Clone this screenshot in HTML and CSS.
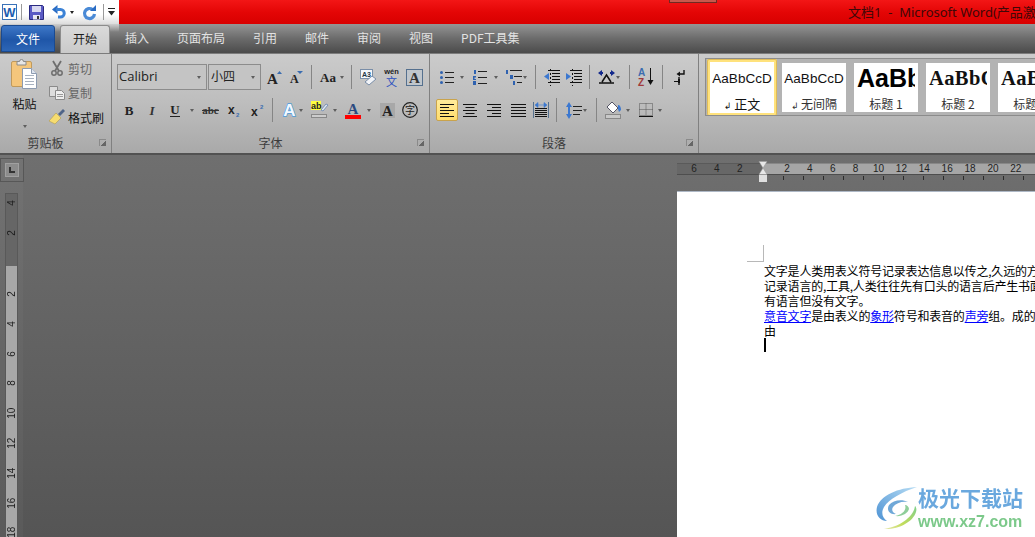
FILE: index.html
```html
<!DOCTYPE html>
<html lang="zh">
<head>
<meta charset="utf-8">
<title>文档1 - Microsoft Word</title>
<link rel="stylesheet" href="styles.css">
</head>
<body>
<div class="window">
  <header class="titlebar">
    <div class="qat">
      <svg class="ml2" width="15" height="16" viewBox="0 0 15 16"><rect x=".5" y=".5" width="14" height="15" fill="#fff" stroke="#3a72b8"/><text x="7.5" y="13" text-anchor="middle" class="svg-sans" font-size="13" font-weight="700" fill="#1c5cb0">W</text></svg>
      <i class="qsep ml4"></i>
      <svg class="ml7" width="15" height="15" viewBox="0 0 15 15"><path d="M.5.5h13l1 1v13H.5z" fill="#5a5ac4" stroke="#2a2a80"/><rect x="3" y="1" width="9" height="6" fill="#d8d8f0"/><rect x="4" y="10" width="7" height="4.500" fill="#e8e8f4"/><rect x="8" y="11" width="2" height="3" fill="#333"/></svg>
      <svg class="ml8" width="13" height="14" viewBox="0 0 13 14"><path d="M0 4.500 5.500 0v9z" fill="#2a6cc4"/><path d="M4 4.500h4.500a3.300 3.300 0 0 1 0 7.500H6" fill="none" stroke="#3b82d6" stroke-width="3"/></svg>
      <i class="drop dark ml5"></i>
      <svg class="ml9" width="13" height="14" viewBox="0 0 13 14"><path d="M9.500 4.500A5 5 0 1 0 11.500 9" fill="none" stroke="#4a8ad6" stroke-width="3.200"/><path d="M7 6h6V0z" fill="#2a6cc4"/></svg>
      <i class="qsep ml7"></i>
      <svg class="ml4" width="7" height="8" viewBox="0 0 7 8"><path d="M0 0h7v1H0z" fill="#222"/><path d="M0 3h7L3.500 7.500z" fill="#222"/></svg>
    </div>
    <div class="title-red">
      <span class="winctl"></span>
      <span class="title-text">文档1&nbsp; - &nbsp;Microsoft Word(产品激活失败)</span>
    </div>
  </header>

  <nav class="tabs">
    <div class="tab-file">文件</div>
    <div class="tab-home">开始</div>
    <div class="tab t1">插入</div>
    <div class="tab t2">页面布局</div>
    <div class="tab t2">引用</div>
    <div class="tab t2">邮件</div>
    <div class="tab t2">审阅</div>
    <div class="tab t2">视图</div>
    <div class="tab t2">PDF工具集</div>
  </nav>

  <section class="ribbon">
    <div class="group g-clip">
      <div class="clip-body">
        <div class="paste">
          <svg width="27" height="31" viewBox="0 0 27 31"><rect x=".5" y="3.500" width="20" height="25" rx="1.500" fill="#f4c67c" stroke="#c09a5c"/><path d="M6 3.500h2.500a2 2 0 0 1 4 0H15v3.500H6z" fill="#e6e6e6" stroke="#8a8a8a"/><path d="M11.500 10.500h9l5 5v15h-14z" fill="#fff" stroke="#8d9bb0"/><path d="M20.500 10.500v5h5" fill="#dfe6f0" stroke="#8d9bb0"/><path d="M14 17.500h9M14 20.500h9M14 23.500h9M14 26.500h9" stroke="#a8b2c0"/></svg>
          <span class="paste-label">粘贴</span>
          <i class="drop"></i>
        </div>
        <div class="clip-list">
          <div class="clip-item off"><svg width="16" height="16" viewBox="0 0 16 16"><path d="M4 1 10 11M12 1 6 11" stroke="#6e6e6e" stroke-width="1.800" fill="none"/><circle cx="5" cy="13" r="2.200" fill="none" stroke="#6e6e6e" stroke-width="1.500"/><circle cx="11" cy="13" r="2.200" fill="none" stroke="#6e6e6e" stroke-width="1.500"/></svg><span>剪切</span></div>
          <div class="clip-item off"><svg width="16" height="16" viewBox="0 0 16 16"><path d="M.5 1.500h8v10h-8z" fill="#ddd" stroke="#8a8a8a"/><path d="M6.500 5.500h6l3 3v6h-9z" fill="#eee" stroke="#8a8a8a"/><path d="M8 9.500h6M8 11.500h6" stroke="#999"/></svg><span>复制</span></div>
          <div class="clip-item"><svg width="16" height="16" viewBox="0 0 16 16"><path d="M0 12 7 4l5 5-6 6z" fill="#f6dc70" stroke="#b09a50" stroke-width=".6"/><path d="M9 5l5-5 2 2-5 5z" fill="#4f6488"/></svg><span>格式刷</span></div>
        </div>
      </div>
      <footer class="group-label">剪贴板<i class="launcher"></i></footer>
    </div>

    <div class="group g-font">
      <div class="row r1">
        <div class="combo c-font ml5"><span>Calibri</span><i class="drop"></i></div>
        <div class="combo c-size ml1"><span>小四</span><i class="drop"></i></div>
        <svg class="ml6" width="15" height="15" viewBox="0 0 15 15"><text x="0" y="14" class="svg-serif" font-size="15" font-weight="700" fill="#222">A</text><path d="M10 4l2.500-3L15 4z" fill="#3a6cb0"/></svg>
        <svg class="ml8" width="13" height="13" viewBox="0 0 13 13"><text x="0" y="12" class="svg-serif" font-size="12" font-weight="700" fill="#222">A</text><path d="M7 0h6l-3 3z" fill="#3a6cb0"/></svg>
        <i class="sep ml8"></i>
        <svg class="ml8" width="17" height="14" viewBox="0 0 17 14"><text x="0" y="12" class="svg-serif" font-size="13" font-weight="700" fill="#222">Aa</text></svg>
        <i class="drop ml3"></i>
        <i class="sep ml7"></i>
        <svg class="ml8" width="17" height="17" viewBox="0 0 17 17"><rect x=".5" y=".5" width="12" height="9" fill="#f4f7fb" stroke="#7a8ea8"/><text x="2" y="8" class="svg-sans" font-size="7" font-weight="700" fill="#234">A3</text><path d="M5 13l7-6 4 3-7 6z" fill="#f2f4f8" stroke="#7a8ea8"/></svg>
        <svg class="ml6" width="17" height="18" viewBox="0 0 17 18"><text x="8.500" y="6" text-anchor="middle" class="svg-sans" font-size="7.500" font-weight="700" fill="#222">wén</text><text x="8.500" y="18" text-anchor="middle" class="svg-cjk" font-size="11" fill="#2a4fc0">文</text></svg>
        <svg class="ml6" width="17" height="17" viewBox="0 0 17 17"><rect x=".5" y=".5" width="16" height="16" fill="#c0c6cc" stroke="#55708e"/><text x="8.500" y="14" text-anchor="middle" class="svg-serif" font-size="15" font-weight="700" fill="#333">A</text></svg>
      </div>
      <div class="row r2">
        <svg class="ml11" width="12" height="14" viewBox="0 0 12 14"><text x="6" y="12" text-anchor="middle" class="svg-serif" font-size="13" font-weight="700" fill="#222">B</text></svg>
        <svg class="ml12" width="10" height="14" viewBox="0 0 10 14"><text x="5" y="12" text-anchor="middle" class="svg-serif" font-size="13" font-weight="700" font-style="italic" fill="#333">I</text></svg>
        <svg class="ml12" width="12" height="15" viewBox="0 0 12 15"><text x="6" y="11" text-anchor="middle" class="svg-serif" font-size="13" font-weight="700" fill="#222">U</text><path d="M1 13.500h10" stroke="#222"/></svg>
        <i class="drop ml9"></i>
        <svg class="ml8" width="17" height="14" viewBox="0 0 17 14"><text x="8.500" y="11" text-anchor="middle" class="svg-serif" font-size="11" font-weight="700" fill="#333">abc</text><path d="M0 7.500h17" stroke="#333"/></svg>
        <svg class="ml9" width="13" height="13" viewBox="0 0 13 13"><text x="0" y="10" class="svg-sans" font-size="12" font-weight="700" fill="#222">x</text><text x="8" y="12.500" class="svg-sans" font-size="6" font-weight="700" fill="#3a6cb0">2</text></svg>
        <svg class="ml10" width="14" height="13" viewBox="0 0 14 13"><text x="0" y="12" class="svg-sans" font-size="12" font-weight="700" fill="#222">x</text><text x="9" y="5" class="svg-sans" font-size="6" font-weight="700" fill="#3a6cb0">2</text></svg>
        <i class="sep ml7"></i>
        <svg class="ml9" width="15" height="16" viewBox="0 0 15 16"><text x="7.500" y="14" text-anchor="middle" class="svg-sans glow" font-size="17" font-weight="700" fill="#f2f8ff">A</text></svg>
        <i class="drop ml2"></i>
        <svg class="ml8" width="17" height="18" viewBox="0 0 17 18"><rect x="0" y="0" width="10" height="9" fill="#ffff40"/><text x="0" y="8" class="svg-sans" font-size="9" font-weight="700" fill="#222">ab</text><path d="M10 9l5-6 2 1-5 6z" fill="#dfe8f4" stroke="#5a7aa8" stroke-width=".7"/><rect x=".5" y="13.500" width="15" height="3" fill="#ccc" stroke="#888"/></svg>
        <i class="drop ml5"></i>
        <svg class="ml8" width="16" height="18" viewBox="0 0 16 18"><text x="8" y="13" text-anchor="middle" class="svg-serif" font-size="15" font-weight="700" fill="#2b4a80">A</text><rect y="14" width="16" height="4" fill="#f00"/></svg>
        <i class="drop ml6"></i>
        <svg class="ml9" width="15" height="15" viewBox="0 0 15 15"><rect width="15" height="15" fill="#a8a8a8"/><text x="7.500" y="13" text-anchor="middle" class="svg-serif" font-size="15" font-weight="700" fill="#222">A</text></svg>
        <svg class="ml7" width="16" height="16" viewBox="0 0 16 16"><circle cx="8" cy="8" r="7.300" fill="none" stroke="#222" stroke-width="1.200"/><text x="8" y="12" text-anchor="middle" class="svg-cjk" font-size="10" fill="#222">字</text></svg>
      </div>
      <footer class="group-label">字体<i class="launcher"></i></footer>
    </div>

    <div class="group g-para">
      <div class="row r1">
        <svg class="ml10" width="14" height="13" viewBox="0 0 14 13"><path d="M5 1.500h9M5 6.500h9M5 11.500h9" stroke="#222"/><circle cx="1.500" cy="1.500" r="1.500" fill="#2f62b0"/><circle cx="1.500" cy="6.500" r="1.500" fill="#2f62b0"/><circle cx="1.500" cy="11.500" r="1.500" fill="#2f62b0"/></svg>
        <i class="drop ml6"></i>
        <svg class="ml9" width="14" height="15" viewBox="0 0 14 15"><path d="M5 1.500h9M5 7.500h9M5 13.500h9" stroke="#222"/><path d="M1 0h2v4H1zM0 6h3v1.500H1.500V9H3v1H0zM0 11h3v4H0z" fill="#2f62b0"/></svg>
        <i class="drop ml7"></i>
        <svg class="ml7" width="17" height="15" viewBox="0 0 17 15"><path d="M5 .5h12M9 6.500h8M12 12.500h5" stroke="#222"/><path d="M1 0h2v4H1zM5 5h3v4H5zM8 11h2v4H8z" fill="#2f62b0"/></svg>
        <i class="drop ml1"></i>
        <i class="sep ml8"></i>
        <svg class="ml8" width="16" height="17" viewBox="0 0 16 17"><path d="M4 1.500h12M8 4.500h8M8 7.500h8M8 10.500h8M4 13.500h12" stroke="#111"/><path d="M6.500 0v17" stroke="#111" stroke-dasharray="2 2"/><path d="M0 7.500l5-3.500v7z" fill="#3c78d0"/></svg>
        <svg class="ml6" width="16" height="17" viewBox="0 0 16 17"><path d="M4 1.500h12M8 4.500h8M8 7.500h8M8 10.500h8M4 13.500h12" stroke="#111"/><path d="M6.500 0v17" stroke="#111" stroke-dasharray="2 2"/><path d="M0 4l5 3.500L0 11z" fill="#3c78d0"/></svg>
        <i class="sep ml7"></i>
        <svg class="ml8" width="17" height="14" viewBox="0 0 17 14"><path d="M1 13h15M4 12l4.500-7 4.500 7" fill="none" stroke="#111" stroke-width="1.500"/><path d="M0 3l4-3v2h1v2H4v2zM17 3l-4-3v2h-1v2h1v2z" fill="#12288c"/></svg>
        <i class="drop ml1"></i>
        <i class="sep ml9"></i>
        <svg class="ml8" width="16" height="18" viewBox="0 0 16 18"><text x="0" y="8" class="svg-sans" font-size="10" font-weight="700" fill="#3a6cb0">A</text><text x="0" y="17.500" class="svg-sans" font-size="10" font-weight="700" fill="#a03a3a">Z</text><path d="M12.500 0v14" stroke="#111"/><path d="M9.500 12h6l-3 5z" fill="#111"/></svg>
        <i class="sep ml8"></i>
        <svg class="ml11" width="11" height="16" viewBox="0 0 11 16"><path d="M10 1v4H5" fill="none" stroke="#111" stroke-width="1.400"/><path d="M6 2.500 2.500 5 6 7.500z" fill="#111"/><path d="M5 8v8" stroke="#111" stroke-width="1.400"/><path d="M0 12h4v-2h2v4H4v-1H0z" fill="#111"/></svg>
      </div>
      <div class="row r2">
        <div class="active ml6"><svg width="14" height="13" viewBox="0 0 14 13"><path d="M0 .5h14M0 3.500h9M0 6.500h14M0 9.500h9M0 12.500h14" stroke="#111"/></svg></div>
        <svg class="ml5" width="14" height="13" viewBox="0 0 14 13"><path d="M0 .5h14M2.500 3.500h9M0 6.500h14M2.500 9.500h9M0 12.500h14" stroke="#111"/></svg>
        <svg class="ml10" width="14" height="13" viewBox="0 0 14 13"><path d="M0 .5h14M5 3.500h9M0 6.500h14M5 9.500h9M0 12.500h14" stroke="#111"/></svg>
        <svg class="ml10" width="15" height="13" viewBox="0 0 15 13"><path d="M0 .5h15M0 3.500h15M0 6.500h15M0 9.500h15M0 12.500h15" stroke="#111"/></svg>
        <svg class="ml7" width="16" height="16" viewBox="0 0 16 16"><path d="M.5 0v16M15.500 0v16" stroke="#55708e"/><path d="M2 6.500h12M2 8.500h12M2 10.500h12M2 12.500h12M2 14.500h12" stroke="#111"/><path d="M2 3l3-2.500v5zM14 3l-3-2.500v5zM4 3h8" fill="#3c78d0" stroke="#3c78d0" stroke-width=".6"/></svg>
        <i class="sep ml7"></i>
        <svg class="ml9" width="16" height="17" viewBox="0 0 16 17"><path d="M7 4.500h9M7 8.500h9M7 12.500h7" stroke="#222"/><path d="M3 0l3 5H0zM3 17l3-5H0z" fill="#3c78d0"/><path d="M2 5h2v7H2z" fill="#3c78d0"/></svg>
        <i class="drop ml1"></i>
        <i class="sep ml9"></i>
        <svg class="ml8" width="17" height="18" viewBox="0 0 17 18"><path d="M2 6l5-5 6 6-5 5z" fill="#fff" stroke="#556"/><path d="M13 4c2 0 3 2 3 5l-2 2-1-3z" fill="#3c78d0"/><rect x=".5" y="13.500" width="15" height="4" fill="#c8c8c8" stroke="#888"/></svg>
        <i class="drop ml4"></i>
        <svg class="ml9" width="14" height="14" viewBox="0 0 14 14"><path d="M.5.5h13v12H.5zM7 .5v12M.5 6.500h13" fill="none" stroke="#555" stroke-dasharray="1 1"/><path d="M0 13.500h14" stroke="#111"/></svg>
        <i class="drop ml5"></i>
      </div>
      <footer class="group-label lbl-para">段落<i class="launcher"></i></footer>
    </div>

    <div class="g-styles">
      <div class="gallery">
        <div class="style current">
          <div class="preview normal">AaBbCcD</div>
          <div class="style-name big"><span class="para-mark">↲</span> 正文</div>
        </div>
        <div class="style nospace">
          <div class="preview normal">AaBbCcD</div>
          <div class="style-name"><span class="para-mark">↲</span> 无间隔</div>
        </div>
        <div class="style next">
          <div class="preview h1">AaBb</div>
          <div class="style-name">标题 1</div>
        </div>
        <div class="style next">
          <div class="preview h2">AaBbC</div>
          <div class="style-name">标题 2</div>
        </div>
        <div class="style next">
          <div class="preview h2">AaBbC</div>
          <div class="style-name">标题 3</div>
        </div>
      </div>
    </div>
  </section>

  <main class="workspace">
    <aside class="left-col">
      <div class="corner"><div class="corner-btn"><i class="corner-l"></i></div></div>
      <div class="vruler">
        <div class="v-dark"><span class="vn">4</span><span class="vn">2</span></div>
        <div class="v-light">
          <span class="vn">2</span><span class="vn">4</span><span class="vn">6</span><span class="vn">8</span><span class="vn">10</span><span class="vn">12</span><span class="vn">14</span><span class="vn">16</span><span class="vn">18</span>
        </div>
      </div>
    </aside>
    <div class="doc-area">
      <div class="hruler">
        <div class="h-dark"><span class="hn">6</span><span class="hn">4</span><span class="hn">2</span></div>
        <div class="h-light">
          <span class="hn">2</span><span class="hn">4</span><span class="hn">6</span><span class="hn">8</span><span class="hn">10</span><span class="hn">12</span><span class="hn">14</span><span class="hn">16</span><span class="hn">18</span><span class="hn">20</span><span class="hn">22</span>
        </div>
        <svg class="indent" width="8" height="21" viewBox="0 0 8 21"><path d="M0 .5h8L4 7zM0 13.500 4 7l4 6.500z" fill="#e8e8e8" stroke="#999" stroke-width=".5"/><rect y="14" width="8" height="7" fill="#e0e0e0"/></svg>
      </div>
      <div class="hticks"></div>
      <article class="page">
        <div class="margin-mark"></div>
        <div class="body-text">
          <p>文字是人类用表义符号记录表达信息以传之,久远的方式和工具</p>
          <p>记录语言的,工具,人类往往先有口头的语言后产生书面文字,很多</p>
          <p>有语言但没有文字。</p>
          <p><a class="lnk">意音文字</a>是由表义的<a class="lnk">象形</a>符号和表音的<a class="lnk">声旁</a>组。成的文字,汉字是</p>
          <p>由</p>
          <i class="caret"></i>
        </div>
      </article>
    </div>
    <div class="watermark">
      <svg width="42" height="44" viewBox="0 0 42 44">
        <defs>
          <linearGradient id="wmb" x1="1" y1="0" x2="0" y2="1"><stop offset="0" stop-color="#b6dcf4"/><stop offset="1" stop-color="#4e93d4"/></linearGradient>
          <linearGradient id="wmg" x1="1" y1="0" x2="0" y2="1"><stop offset="0" stop-color="#7ed08c"/><stop offset=".6" stop-color="#c2dc5a"/><stop offset="1" stop-color="#e8e8b0"/></linearGradient>
        </defs>
        <path d="M41 1C22 2 5 9 1 21c-2 8 3 14 10 14-5-3-6-9-3-14C13 13 26 6 41 1z" fill="url(#wmb)"/>
        <path d="M32 16c-6-3-15-2-19 3-3 5 1 10 7 9-3-1-5-4-3-7 3-4 9-6 15-5z" fill="#6fa8d8"/>
        <path d="M39 20c-1 9-12 20-31 23 14 1 29-7 32-17 1-3 0-5-1-6z" fill="url(#wmg)"/>
        <path d="M29 19c2 5-3 10-10 11 7 1 13-3 14-7 0-2-2-4-4-4z" fill="#8fce9a"/>
      </svg>
      <div class="wm-text">
        <div class="wm-cn">极光下载站</div>
        <div class="wm-url">www.xz7.com</div>
      </div>
    </div>
  </main>
</div>
</body>
</html>
```

FILE: styles.css
```css
* { box-sizing: border-box; }
html, body { margin: 0; padding: 0; height: 100%; overflow: hidden; background: #5c5c5c; }
body { font-family: "Noto Sans CJK SC", "Liberation Sans", sans-serif; font-size: 12px; color: #222; }
i { display: block; flex: none; }
svg { display: block; flex: none; overflow: visible; }
p { margin: 0; }

.svg-sans { font-family: "Liberation Sans", sans-serif; }
.svg-serif { font-family: "Liberation Serif", serif; }
.svg-cjk { font-family: "Noto Sans CJK SC", sans-serif; }
.glow { stroke: #4d9bd8; stroke-width: 1.4px; paint-order: stroke; }

.ml1 { margin-left: 1px; } .ml2 { margin-left: 2px; } .ml3 { margin-left: 3px; }
.ml4 { margin-left: 4px; } .ml5 { margin-left: 5px; } .ml6 { margin-left: 6px; }
.ml7 { margin-left: 7px; } .ml8 { margin-left: 8px; } .ml9 { margin-left: 9px; }
.ml10 { margin-left: 10px; } .ml11 { margin-left: 11px; } .ml12 { margin-left: 12px; }

.window { width: 1035px; height: 537px; display: flex; flex-direction: column; overflow: hidden; }

/* title bar */
.titlebar { display: flex; height: 24px; flex: none; }
.qat { width: 119px; flex: none; display: flex; align-items: center; background: linear-gradient(#fff 0, #fff 60%, #dcdcdc 100%); }
.qsep { width: 1px; height: 16px; background: #9a9a9a; }
.title-red { position: relative; flex: 1; display: flex; align-items: center; padding-left: 729px; background: linear-gradient(#f31616, #e40606 50%, #d80000); overflow: hidden; }
.title-text { font-family: "Noto Sans", "Noto Sans CJK SC", sans-serif; font-size: 13px; line-height: 24px; white-space: nowrap; color: #400808; }
.winctl { position: absolute; left: 550px; top: -1px; width: 48px; height: 4px; background: #c8584c; border: 1px solid #6e2a22; }

.drop { width: 0; height: 0; border-style: solid; border-width: 3px 2.5px 0; border-color: #5e5e5e transparent transparent; }
.drop.dark { border-top-color: #222; }

/* tabs */
.tabs { height: 29px; flex: none; display: flex; align-items: flex-end; color: #e2e2e2;
  background: linear-gradient(rgba(255,255,255,.55), rgba(255,255,255,0)) 0 0 / 119px 8px no-repeat, linear-gradient(#959595, #6b6b6b 50%, #4b4b4b); }
.tab-file { width: 54px; height: 27px; margin: 0 0 1px 1px; padding-bottom: 1px; display: flex; align-items: center; justify-content: center; color: #fff; font-size: 12px; background: linear-gradient(#3e78c8, #1f56a8 55%, #2d66b6); border: 1px solid #1a4a90; border-radius: 3px 3px 0 0; }
.tab-home { width: 50px; height: 28px; margin-left: 5px; padding-bottom: 3px; display: flex; align-items: center; justify-content: center; color: #1c1c1c; background: linear-gradient(#dadada, #cacaca); border: 1px solid #8c8c8c; border-bottom: 0; border-radius: 3px 3px 0 0; }
.tab { height: 28px; padding-bottom: 3px; display: flex; align-items: center; white-space: nowrap; }
.t1 { margin-left: 15px; }
.t2 { margin-left: 28px; }

/* ribbon */
.ribbon { height: 102px; flex: none; display: flex; background: linear-gradient(#cbcbcb, #bdbdbd 50%, #a9a9a9); border-bottom: 2px solid #525252; border-top: 1px solid #7c7c7c; }
.group { display: flex; flex-direction: column; border-right: 1px solid #808080; flex: none; height: 99px; }
.g-clip { width: 112px; }
.g-font { width: 318px; }
.g-para { width: 269px; }
.group-label { position: relative; margin-top: auto; height: 22px; display: flex; align-items: center; justify-content: center; color: #3c3c3c; flex: none; }
.launcher { position: absolute; right: 5px; top: 8px; width: 7px; height: 7px; border-top: 1px solid #8a8a8a; border-left: 1px solid #8a8a8a; background: linear-gradient(135deg, transparent 55%, #666 55%); }
.g-clip .group-label { padding-right: 20px; }
.lbl-para { padding-right: 20px; }

.clip-body { display: flex; flex: 1; }
.paste { width: 49px; display: flex; flex-direction: column; align-items: center; padding-top: 4px; flex: none; }
.paste-label { margin-top: 6px; line-height: 17px; color: #111; }
.paste .drop { margin-top: 13px; }
.clip-list { padding-top: 2px; }
.clip-item { height: 24.500px; display: flex; align-items: center; gap: 3px; color: #111; }
.clip-item.off { color: #666; }

.row { display: flex; align-items: center; flex: none; }
.r1 { height: 26px; margin-top: 10px; }
.r2 { height: 24px; margin-top: 8px; }
.sep { width: 1px; height: 24px; background: #858585; }
.combo { height: 26px; display: flex; align-items: center; justify-content: space-between; padding: 0 5px 0 2px; border: 1px solid #8c8c8c; background: #c4c4c4; flex: none; }
.c-font { width: 90px; padding-left: 1px; font: 13px "Open Sans", "Liberation Sans", sans-serif; color: #222; }
.c-size { width: 53px; }
.c-font span, .c-size span { line-height: 22px; margin-top: -2px; }
.active { width: 22px; height: 22px; display: flex; align-items: center; justify-content: center; background: linear-gradient(#ffeb9a, #ffdc6c); border: 1px solid #c9a34c; border-radius: 2px; flex: none; }

/* styles gallery */
.g-styles { flex: 1; padding: 4px 0 0 6px; min-width: 0; }
.gallery { height: 58px; display: flex; align-items: center; background: #b3b3b3; border: 1px solid #8c8c8c; border-right: 0; overflow: hidden; }
.style { flex: none; width: 64px; height: 49px; background: #fff; display: flex; flex-direction: column; align-items: center; overflow: hidden; }
.current { width: 70px; height: 57px; margin-left: 1px; border: 3px solid #ffe27c; border-radius: 2px; outline: 1px solid #e0bc58; outline-offset: -1px; }
.nospace { margin-left: 5px; }
.next { margin-left: 8px; }
.preview { width: 58px; height: 32px; flex: none; display: flex; align-items: center; justify-content: center; white-space: nowrap; overflow: hidden; color: #111; }
.current .preview { height: 33px; width: 60px; }
.normal { font: 13.500px "Liberation Sans", sans-serif; }
.nospace .normal { width: 60px; }
.h1 { font: 700 25px "Liberation Sans", sans-serif; justify-content: flex-start; color: #000; }
.h2 { font: 700 20.500px "Liberation Serif", serif; justify-content: flex-start; letter-spacing: .4px; }
.style-name { height: 17px; line-height: 17px; white-space: nowrap; color: #333; }
.style-name.big { font-size: 13px; color: #111; }
.para-mark { font-family: "DejaVu Sans", sans-serif; font-size: 9px; }

/* workspace */
.workspace { position: relative; flex: 1; display: flex; min-height: 0; background: linear-gradient(#6f6f6f, #555); overflow: hidden; }
.left-col { width: 23px; flex: none; padding-top: 3px; background: rgba(255,255,255,.03); display: flex; flex-direction: column; }
.corner { width: 24px; height: 24px; border: 1px solid #575757; padding: 4px; flex: none; }
.corner-btn { width: 14px; height: 14px; background: #8c8c8c; border: 1px solid #a0a0a0; position: relative; }
.corner-l { width: 6px; height: 6px; margin: 3px 0 0 3px; border-left: 2px solid #333; border-bottom: 2px solid #333; }
.vruler { margin: 11px 0 0 5px; width: 13px; flex: 1; display: flex; flex-direction: column; border: 1px solid #595959; border-bottom: 0; font: 10px "Liberation Sans", sans-serif; color: #1c1c1c; }
.v-dark { height: 72px; flex: none; background: #666; display: flex; flex-direction: column; justify-content: flex-end; padding-bottom: 18px; }
.v-light { flex: 1; background: #a8a8a8; padding-top: 13.100px; }
.vn { display: flex; align-items: center; justify-content: center; height: 29.800px; writing-mode: vertical-rl; transform: rotate(180deg); flex: none; }

.doc-area { flex: 1; min-width: 0; padding: 8px 0 0 654px; display: flex; flex-direction: column; }
.hruler { position: relative; height: 12px; display: flex; flex: none; font: 10px "Liberation Sans", sans-serif; color: #222; }
.h-dark { width: 86px; flex: none; background: #676767; border-top: 1px solid #5a5a5a; border-bottom: 1px solid #4e4e4e; display: flex; align-items: center; padding-left: 5.500px; }
.h-light { flex: 1; background: #a6a6a6; border-top: 1px solid #888; border-bottom: 1px solid #4e4e4e; display: flex; align-items: center; padding-left: 12.500px; }
.hn { flex: none; width: 22.900px; text-align: center; line-height: 10px; }
.indent { position: absolute; left: 82px; top: -2px; }
.hticks { height: 16px; margin-left: 86px; flex: none; background: repeating-linear-gradient(to right, #2c2c2c 0 1px, transparent 1px 20px) 0 1px / 100% 4px no-repeat; }
.page { flex: 1; background: #fff; border-top: 1px solid #aeb8c6; padding: 53px 0 0 70px; overflow: hidden; }
.margin-mark { width: 17px; height: 17px; border-right: 1px solid #b8b8b8; border-bottom: 1px solid #b8b8b8; margin-bottom: 1px; }
.body-text { margin-left: 17px; line-height: 15px; white-space: nowrap; font-size: 12px; color: #000; letter-spacing: -.2px; }
.lnk { color: #00f; text-decoration: underline; }
.caret { width: 2px; height: 14px; background: #000; }

.watermark { position: absolute; right: 10px; bottom: 7px; display: flex; align-items: flex-start; filter: blur(.35px); }
.wm-text { width: 107px; margin-top: 1px; }
.wm-cn { font-size: 21px; font-weight: 700; line-height: 21px; color: #6aa8de; white-space: nowrap; }
.wm-url { font: 700 16px/16px "Liberation Sans", sans-serif; color: #7cc98a; margin-top: 6px; white-space: nowrap; }
```
